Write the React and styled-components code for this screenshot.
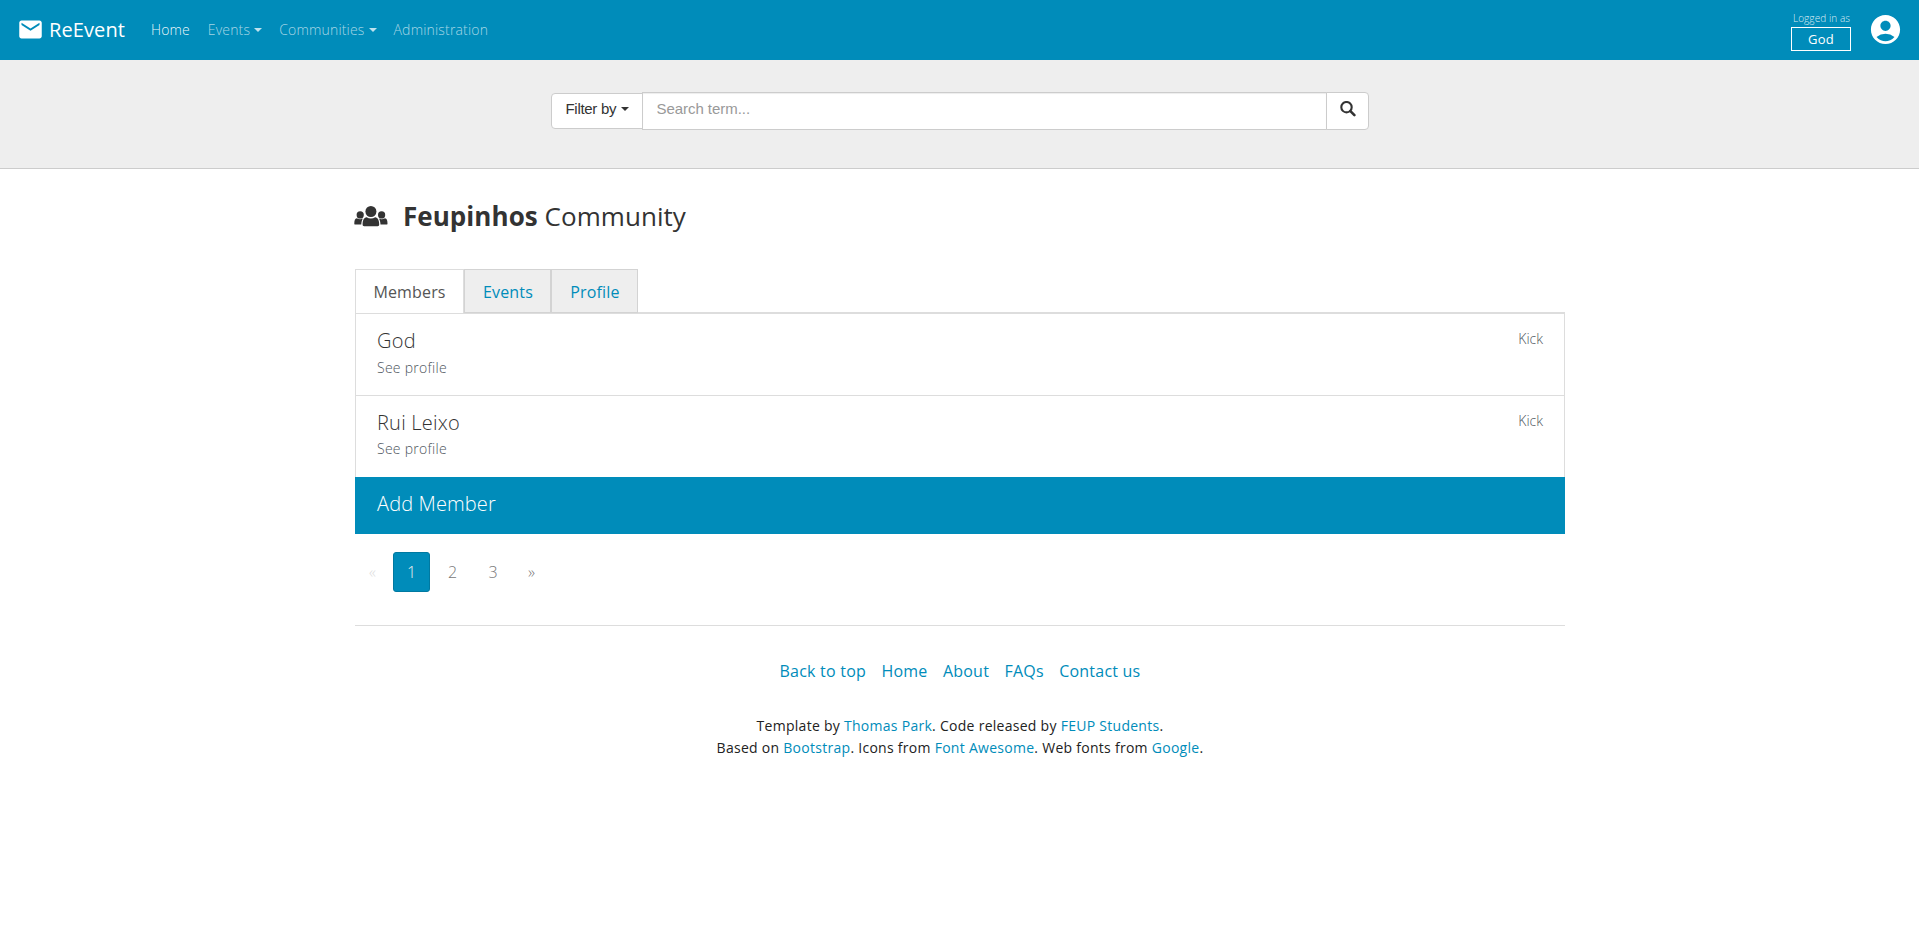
import React from "react";
import styled, { createGlobalStyle } from "styled-components";
import { MdEmail, MdAccountCircle } from "react-icons/md";

const Global = createGlobalStyle`
  *, *::before, *::after { box-sizing: border-box; }
  body {
    margin: 0;
    background: #fff;
    color: #222;
    font-family: "Open Sans", sans-serif;
    font-size: 16px;
    line-height: 24px;
  }
  a { color: #008cba; text-decoration: none; }
`;

const Navbar = styled.nav`
  height: 60px;
  padding: 0 16px 0 18px;
  background: #008cba;
  display: flex;
  align-items: center;
`;

const Brand = styled.a`
  && { color: #fff; }
  display: flex;
  align-items: center;
  gap: 5px;
  width: 133px;
  font-size: 20px;
  line-height: 26px;
  letter-spacing: 0.1px;
  svg { width: 27px; height: 27px; margin: 0 0 1px -1px; }
`;

const NavLink = styled.a`
  && { color: ${(p) => (p.$active ? "rgba(255,255,255,.95)" : "rgba(255,255,255,.65)")}; }
  display: flex;
  align-items: center;
  margin-right: ${(p) => (p.$active ? 18 : 17)}px;
  font-size: 14px;
  font-weight: 300;
  letter-spacing: ${(p) => (p.$active ? 0.1 : 0.18)}px;
`;

const Caret = styled.span`
  width: 0;
  height: 0;
  margin-left: ${(p) => p.$gap || 4}px;
  border-left: 4px solid transparent;
  border-right: 4px solid transparent;
  border-top: 4px solid ${(p) => p.$color || "rgba(255,255,255,.75)"};
`;

const Session = styled.div`
  margin-left: auto;
  margin-right: 17px;
  width: 60px;
  display: flex;
  flex-direction: column;
  align-items: center;
  padding-top: 2px;
`;

const SessionLabel = styled.span`
  color: rgba(255, 255, 255, 0.85);
  font-size: 10px;
  line-height: 15px;
  font-weight: 300;
  white-space: nowrap;
  padding-left: 1px;
  letter-spacing: 0.08px;
`;

const SessionUser = styled.a`
  && { color: #fff; }
  width: 60px;
  height: 24px;
  margin: 1px 0;
  border: 1px solid #fff;
  font-size: 13px;
  line-height: 23px;
  text-align: center;
  letter-spacing: 0.2px;
`;

const Avatar = styled(MdAccountCircle)`
  color: #fff;
  width: 35px;
  height: 35px;
  margin-bottom: 2px;
`;

const SearchBand = styled.header`
  height: 109px;
  padding-top: 32px;
  background: #eee;
  border-bottom: 1px solid #ccc;
  display: flex;
  justify-content: center;
  align-items: flex-start;
  font-family: "Liberation Sans", sans-serif;
  font-size: 15px;
`;

const FilterButton = styled.button`
  width: 92px;
  height: 36px;
  margin: 1px -1px 0 0;
  padding: 0 0 4px 14px;
  display: flex;
  align-items: center;
  font: inherit;
  letter-spacing: -0.3px;
  color: #333;
  background: #fff;
  border: 1px solid #ccc;
  border-radius: 4px 0 0 4px;
`;

const SearchInput = styled.input`
  width: 685px;
  height: 38px;
  padding: 0 13px 6px 14px;
  font: inherit;
  letter-spacing: -0.05px;
  background: #fff;
  border: 1px solid #ccc;
  border-radius: 0;
  box-shadow: inset 0 1px 1px rgba(0, 0, 0, 0.075);
  &::placeholder { color: #999; opacity: 1; }
`;

const SearchButton = styled.button`
  width: 43px;
  height: 38px;
  margin-left: -1px;
  padding: 0 0 5px 1px;
  display: flex;
  align-items: center;
  justify-content: center;
  color: #333;
  background: #fff;
  border: 1px solid #ccc;
  border-radius: 0 4px 4px 0;
`;

const Container = styled.main`
  width: 1210px;
  margin: 0 auto 0 355px;
`;

const Title = styled.h1`
  margin: 0;
  padding-top: 28px;
  height: 100px;
  display: flex;
  align-items: flex-start;
  color: #333;
  font-size: 26px;
  line-height: 38px;
  font-weight: 400;
  letter-spacing: 0.05px;
  white-space: pre;
  svg { flex: none; margin: 9px 15px 0 -1px; }
`;

const Tabs = styled.div`
  display: flex;
  height: 43px;
`;

const Tab = styled.a`
  && { color: ${(p) => (p.$active ? "#555" : "#008cba")}; }
  width: ${(p) => p.$width}px;
  height: 44px;
  padding-left: ${(p) => (p.$active ? 0 : 1)}px;
  border: 1px solid ${(p) => (p.$active ? "#ddd" : "#d3d3d3")};
  border-bottom-width: ${(p) => (p.$active ? 0 : 1)}px;
  background: ${(p) => (p.$active ? "#fff" : "#eee")};
  text-align: center;
  line-height: 45px;
  letter-spacing: 0.16px;
`;

const List = styled.section`
  border-top: 1px solid #ddd;
`;

const Member = styled.article`
  height: 82px;
  padding: 14px 21px 0;
  border: 1px solid #ddd;
  border-bottom: 0;
  display: flex;
  justify-content: space-between;
  font-weight: 300;
`;

const MemberName = styled.h2`
  margin: 0;
  font-size: 20px;
  line-height: 26px;
  font-weight: 300;
  letter-spacing: 0.22px;
  color: #333;
`;

const MemberLink = styled.a`
  && { color: #4d555d; }
  display: block;
  font-size: 14px;
  line-height: ${(p) => p.$line}px;
  letter-spacing: ${(p) => p.$spacing || 0}px;
`;

const AddMember = styled.a`
  && { color: #fff; }
  display: block;
  height: 57px;
  padding: 14px 22px;
  background: #008cba;
  font-size: 20px;
  line-height: 26px;
  font-weight: 300;
  letter-spacing: 0.12px;
`;

const Pager = styled.div`
  display: flex;
  height: 74px;
  margin-top: 18px;
  border-bottom: 1px solid #ddd;
`;

const Page = styled.a`
  && { color: ${(p) => (p.$active ? "#eee" : p.$disabled ? "#ddd" : "#777")}; }
  width: ${(p) => p.$width || 37}px;
  height: 40px;
  margin-right: 3px;
  border: 1px solid ${(p) => (p.$active ? "#0079a1" : "transparent")};
  border-radius: 3px;
  background: ${(p) => (p.$active ? "#008cba" : "transparent")};
  font-weight: 300;
  line-height: 38px;
  text-align: center;
`;

const Footer = styled.footer`
  text-align: center;
`;

const FooterLinks = styled.div`
  display: flex;
  justify-content: center;
  gap: 15.4px;
  padding-top: 33px;
  letter-spacing: 0.22px;
`;

const Credits = styled.p`
  margin: 32px 0 0;
  font-size: 14px;
  line-height: 22px;
  letter-spacing: 0.275px;
`;

const SearchIcon = () => (
  <svg width="16" height="16" viewBox="0 0 16 16" fill="none" stroke="currentColor">
    <circle cx="6.5" cy="6.2" r="5.2" strokeWidth="2.1" />
    <path d="M10.4 10.1 14.4 14.1" strokeWidth="2.6" strokeLinecap="round" />
  </svg>
);

const GroupIcon = () => (
  <svg width="34" height="21" viewBox="0 0 34 21" fill="currentColor">
    <circle cx="16.9" cy="5.5" r="5.5" />
    <circle cx="6.2" cy="8.9" r="3.6" />
    <circle cx="27.6" cy="8.9" r="3.6" />
    <path d="M8.6 18.6c0-4.4 1.4-7 4-7.3 2.6 1.6 6 1.6 8.6 0 2.6.3 4 2.9 4 7.3 0 1.200-.5 1.600-1.600 1.600H10.200c-1.100 0-1.600-.4-1.600-1.600Z" />
    <path d="M.3 17.400c0-3 .7-4.900 2.500-5.200 2 1.300 4.700 1.300 6.100.2-1 1.500-1.500 3.500-1.600 6.200H1.600c-.9 0-1.300-.4-1.300-1.200Z" />
    <path d="M33.500 17.400c0-3-.7-4.900-2.500-5.200-2 1.300-4.700 1.300-6.100.2 1 1.500 1.500 3.500 1.600 6.200h5.700c.9 0 1.300-.4 1.300-1.200Z" />
  </svg>
);

export default function App() {
  return (
    <>
      <Global />
      <Navbar>
        <Brand href="#"><MdEmail />ReEvent</Brand>
        <NavLink href="#" $active>Home</NavLink>
        <NavLink href="#">Events<Caret /></NavLink>
        <NavLink href="#">Communities<Caret /></NavLink>
        <NavLink href="#">Administration</NavLink>
        <Session>
          <SessionLabel>Logged in as</SessionLabel>
          <SessionUser href="#">God</SessionUser>
        </Session>
        <Avatar />
      </Navbar>
      <SearchBand>
        <FilterButton>Filter by<Caret $color="#333" $gap={5} /></FilterButton>
        <SearchInput placeholder="Search term..." />
        <SearchButton aria-label="Search"><SearchIcon /></SearchButton>
      </SearchBand>
      <Container>
        <Title><GroupIcon /><b>Feupinhos</b> Community</Title>
        <Tabs>
          <Tab href="#" $active $width={109}>Members</Tab>
          <Tab href="#" $width={87}>Events</Tab>
          <Tab href="#" $width={87}>Profile</Tab>
        </Tabs>
        <List>
          <Member>
            <div>
              <MemberName>God</MemberName>
              <MemberLink href="#" $line={28} $spacing={0.27}>See profile</MemberLink>
            </div>
            <MemberLink href="#" $line={22}>Kick</MemberLink>
          </Member>
          <Member>
            <div>
              <MemberName>Rui Leixo</MemberName>
              <MemberLink href="#" $line={26} $spacing={0.27}>See profile</MemberLink>
            </div>
            <MemberLink href="#" $line={22}>Kick</MemberLink>
          </Member>
          <AddMember href="#">Add Member</AddMember>
        </List>
        <Pager>
          <Page href="#" $disabled $width={35}>«</Page>
          <Page href="#" $active>1</Page>
          <Page href="#" $width={39}>2</Page>
          <Page href="#" $width={36}>3</Page>
          <Page href="#" $width={35}>»</Page>
        </Pager>
        <Footer>
          <FooterLinks>
            <a href="#">Back to top</a>
            <a href="#">Home</a>
            <a href="#">About</a>
            <a href="#">FAQs</a>
            <a href="#">Contact us</a>
          </FooterLinks>
          <Credits>
            Template by <a href="#">Thomas Park</a>. Code released by <a href="#">FEUP Students</a>.<br />
            Based on <a href="#">Bootstrap</a>. Icons from <a href="#">Font Awesome</a>. Web fonts from <a href="#">Google</a>.
          </Credits>
        </Footer>
      </Container>
    </>
  );
}
